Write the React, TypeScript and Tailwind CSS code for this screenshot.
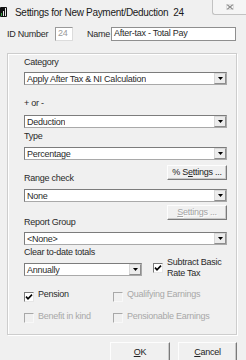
import React from "react";

const font = "font-['Liberation_Sans',Arial,sans-serif]";

const Arrow = () => (
  <span className="ml-auto flex h-[11px] w-[12px] shrink-0 items-center justify-center border border-t-[#d8d8d8] border-l-[#d8d8d8] border-r-[#8e8e8e] border-b-[#8e8e8e] bg-[#ececec]">
    <svg width="5" height="3" viewBox="0 0 5 3">
      <path d="M0 0h5L2.5 3z" fill="#000" />
    </svg>
  </span>
);

const Dropdown = ({ value, className = "" }: { value: string; className?: string }) => (
  <div
    className={`flex h-[13px] items-center border border-t-[#7c7c7c] border-l-[#7c7c7c] border-r-[#a9a9a9] border-b-[#a9a9a9] bg-white ${className}`}
  >
    <span className="truncate pl-[2px] pt-[1px] leading-[11px]">{value}</span>
    <Arrow />
  </div>
);

const Label = ({ children, className = "" }: { children: React.ReactNode; className?: string }) => (
  <div className={`h-[11px] leading-[11px] ${className}`}>{children}</div>
);

const Button = ({
  children,
  disabled = false,
  className = "",
}: {
  children: React.ReactNode;
  disabled?: boolean;
  className?: string;
}) => (
  <div
    className={`flex items-center justify-center border border-t-[#fdfdfd] border-l-[#fdfdfd] border-r-[#7a7a7a] border-b-[#7a7a7a] bg-[#f0f0f0] shadow-[inset_-1px_-1px_0_#c9c9c9] leading-[11px] ${
      disabled ? "text-[#a3a3a3] [text-shadow:1px_1px_0_#fff]" : "text-[#222]"
    } ${className}`}
  >
    {children}
  </div>
);

const Check = ({ checked = false, disabled = false }: { checked?: boolean; disabled?: boolean }) => (
  <span
    className={`flex h-[10px] w-[10px] shrink-0 items-center justify-center border ${
      disabled
        ? "border-t-[#a8a8a8] border-l-[#a8a8a8] border-r-[#f8f8f8] border-b-[#f8f8f8] bg-[#f0f0f0]"
        : "border-t-[#7a7a7a] border-l-[#7a7a7a] border-r-[#e6e6e6] border-b-[#e6e6e6] bg-white"
    }`}
  >
    {checked && (
      <svg width="8" height="8" viewBox="0 0 8 8">
        <path d="M1 3.6 L3 5.8 L7 1.6" stroke="#000" strokeWidth="1.6" fill="none" />
      </svg>
    )}
  </span>
);

const CheckRow = ({
  label,
  checked = false,
  disabled = false,
  className = "",
}: {
  label: string;
  checked?: boolean;
  disabled?: boolean;
  className?: string;
}) => (
  <div className={`flex items-start ${className}`}>
    <span className="mt-[2.5px]">
      <Check checked={checked} disabled={disabled} />
    </span>
    <span className={`ml-[4px] leading-[11px] ${disabled ? "text-[#a8a8a8]" : ""}`}>{label}</span>
  </div>
);

export default function App() {
  return (
    <div
      className={`h-[360px] w-[246px] overflow-hidden bg-[#f0f0f0] text-[9px] tracking-[-0.25px] text-[#2a2a2a] ${font}`}
    >
      {/* title bar */}
      <div className="flex h-[20px] items-start">
        <svg width="7" height="10" viewBox="0 0 7 10" className="mt-[7px] shrink-0">
          <rect x="0" y="0" width="7" height="10" rx="1" fill="#111" />
          <rect x="1" y="6" width="1" height="3" fill="#3fae49" />
          <rect x="3" y="4" width="1" height="5" fill="#e6e6e6" />
          <rect x="5" y="1" width="1" height="8" fill="#e6e6e6" />
        </svg>
        <span className="ml-[8px] pt-[7px] text-[10px] leading-[11px] tracking-[-0.3px] text-[#1a1a1a]">
          Settings for New Payment/Deduction&nbsp; 24
        </span>
        <div className="ml-auto flex h-[15px] w-[34px] items-center justify-center rounded-bl-[3px] border border-t-0 border-r-0 border-[#c2c2c2] bg-[#f5f5f5] pl-[1px]">
          <svg width="8" height="6" viewBox="0 0 8 6">
            <path d="M1 0.5 L7 5.5 M7 0.5 L1 5.5" stroke="#8c8c8c" strokeWidth="1.1" />
            <rect x="0.5" y="0.5" width="7" height="5" fill="none" stroke="#cfcfcf" strokeWidth="0.6" />
          </svg>
        </div>
      </div>

      {/* id + name */}
      <div className="mt-[7px] flex h-[14px] items-center pl-[7px]">
        <span className="w-[48px] leading-[11px]">ID Number</span>
        <div className="flex h-[14px] w-[18px] items-center border border-t-[#9a9a9a] border-l-[#9a9a9a] border-r-[#dcdcdc] border-b-[#dcdcdc] bg-white pl-[2px] text-[#9a9a9a]">
          24
        </div>
        <span className="ml-[14px] w-[24px] leading-[11px]">Name</span>
        <div className="flex h-[14px] w-[125px] items-center border border-[#8f8f8f] bg-white pl-[2px]">
          After-tax - Total Pay
        </div>
      </div>

      {/* group box */}
      <div className="ml-[7px] mt-[12px] w-[230px] border border-[#cdcdcd] pb-[11px] pl-[16px] pr-[9px] pt-[3px] shadow-[1px_1px_0_#fff,inset_1px_1px_0_#fff]">
        <Label>Category</Label>
        <Dropdown value="Apply After Tax & NI Calculation" className="mt-[4px]" />

        <Label className="mt-[13px]">+ or -</Label>
        <Dropdown value="Deduction" className="mt-[6px]" />

        <Label className="mt-[2.5px]">Type</Label>
        <Dropdown value="Percentage" className="mt-[5.5px]" />

        <div className="mt-[5px] flex items-start justify-between">
          <Label className="mt-[8px]">Range check</Label>
          <Button className="h-[15px] w-[60px]">
            % S<span className="underline underline-offset-[1px]">e</span>ttings ...
          </Button>
        </div>
        <Dropdown value="None" className="mt-[5px]" />

        <div className="mt-[3px] flex items-start justify-between">
          <Label className="mt-[12px]">Report Group</Label>
          <Button disabled className="h-[15px] w-[60px]">
            <span className="underline underline-offset-[1px]">S</span>ettings ...
          </Button>
        </div>
        <Dropdown value="<None>" className="mt-[4px]" />

        <Label className="mt-[2px]">Clear to-date totals</Label>
        <div className="flex items-start">
          <Dropdown value="Annually" className="mt-[5px] w-[118px]" />
          <span className="ml-[11px] mt-[4.5px]">
            <Check checked />
          </span>
          <span className="ml-[4px] mt-[-1px] leading-[10.5px]">
            Subtract Basic
            <br />
            Rate Tax
          </span>
        </div>

        <div className="mt-[11px] flex">
          <CheckRow label="Pension" checked className="w-[89px]" />
          <CheckRow label="Qualifying Earnings" disabled />
        </div>
        <div className="mt-[9px] flex">
          <CheckRow label="Benefit in kind" disabled className="w-[89px]" />
          <CheckRow label="Pensionable Earnings" disabled />
        </div>
      </div>

      {/* buttons */}
      <div className="mt-[7px] flex justify-end gap-[8px] pr-[9px]">
        <Button className="h-[20px] w-[60px]">
          <span className="underline underline-offset-[1px]">O</span>K
        </Button>
        <Button className="h-[20px] w-[59px]">
          <span className="underline underline-offset-[1px]">C</span>ancel
        </Button>
      </div>
    </div>
  );
}
